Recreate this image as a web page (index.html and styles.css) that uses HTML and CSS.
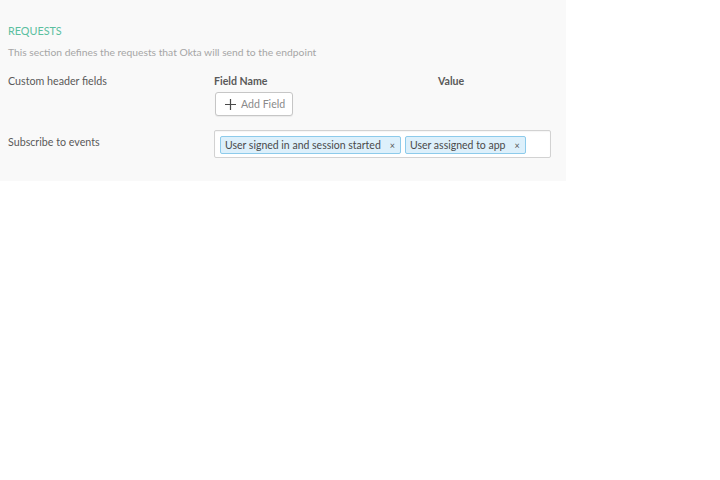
FILE: index.html
```html
<!DOCTYPE html>
<html lang="en">
<head>
    <meta charset="UTF-8">
    <meta name="viewport" content="width=device-width, initial-scale=1.0">
    <title>Requests</title>
    <link rel="stylesheet" href="styles.css">
</head>
<body>
    <section class="requests">
        <h2 class="section-title">REQUESTS</h2>
        <p class="section-desc">This section defines the requests that Okta will send to the endpoint</p>

        <div class="form-row">
            <label class="row-label">Custom header fields</label>
            <div class="row-body">
                <div class="header-cols">
                    <span class="col-name">Field Name</span>
                    <span class="col-value">Value</span>
                </div>
                <button type="button" class="add-btn">
                    <svg width="11" height="11" viewBox="0 0 11 11"><path d="M5.5 0v11M0 5.5h11" stroke="#4a4a4a" stroke-width="1.2"/></svg>
                    Add Field
                </button>
            </div>
        </div>

        <div class="form-row events-row">
            <label class="row-label">Subscribe to events</label>
            <div class="row-body">
                <div class="chip-input">
                    <span class="chip">User signed in and session started <span class="chip-x">&times;</span></span>
                    <span class="chip">User assigned to app <span class="chip-x">&times;</span></span>
                </div>
            </div>
        </div>
    </section>
</body>
</html>
```

FILE: styles.css
```css
body {
    margin: 0;
    padding: 0;
    background-color: #fff;
    font-family: Lato, "Open Sans", Arial, sans-serif;
}
.requests {
    width: 566px;
    height: 181px;
    box-sizing: border-box;
    padding: 24px 0 0 8px;
    background-color: #f9f9f9;
}
.section-title {
    margin: 0;
    font-size: 10.8px;
    font-weight: normal;
    color: #5bbf9f;
    line-height: 14px;
}
.section-desc {
    margin: 7px 0 0;
    font-size: 10.3px;
    color: #a6a6a6;
    line-height: 14px;
}
.form-row {
    display: flex;
    margin-top: 15px;
}
.row-label {
    width: 206px;
    font-size: 10.7px;
    color: #5a5a5a;
    line-height: 14px;
}
.header-cols {
    display: flex;
    font-size: 10.6px;
    font-weight: bold;
    color: #5a5a5a;
    line-height: 14px;
}
.col-name {
    width: 224px;
}
.add-btn {
    display: flex;
    align-items: center;
    gap: 5px;
    margin: 4px 0 0 1px;
    height: 24px;
    width: 78px;
    padding: 0 0 0 9px;
    border: 1px solid #c6c6c6;
    border-radius: 3px;
    background: #fff;
    font-family: inherit;
    font-size: 10.6px;
    color: #8a8a8a;
    box-shadow: 0 1px 1px rgba(0, 0, 0, 0.06);
}
.events-row {
    margin-top: 14px;
}
.events-row .row-label {
    padding-top: 5px;
}
.chip-input {
    display: flex;
    gap: 4px;
    width: 337px;
    height: 28px;
    box-sizing: border-box;
    padding: 5px;
    border: 1px solid #d2d2d2;
    border-radius: 2px;
    background: #fff;
    box-shadow: inset 0 1px 1px rgba(0, 0, 0, 0.04);
}
.chip {
    display: flex;
    align-items: center;
    height: 18px;
    box-sizing: border-box;
    padding: 0 5px 0 4px;
    border: 1px solid #8dcbeb;
    border-radius: 2px;
    background: #ddf0fb;
    font-size: 10.5px;
    color: #4a4a4a;
}
.chip-x {
    margin-left: 9px;
    font-size: 9px;
    color: #555;
}
```
